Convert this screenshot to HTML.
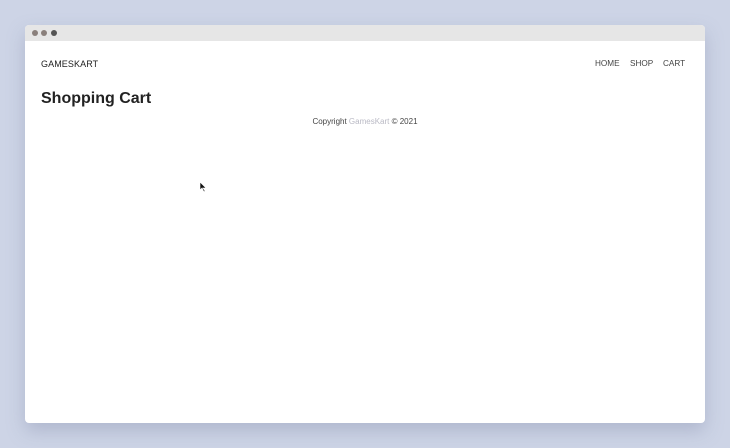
<!DOCTYPE html>
<html><head><meta charset="utf-8"><style>
html,body{margin:0;padding:0;width:730px;height:448px;overflow:hidden;background:#cdd4e6;font-family:"Liberation Sans",sans-serif;}
.win{position:absolute;left:25px;top:25px;width:680px;height:398px;background:#fff;border-radius:4px;box-shadow:0 8px 18px rgba(120,130,160,.35);overflow:hidden;}
.bar{height:16px;background:#e6e6e6;position:relative;}
.d{position:absolute;top:5px;width:6px;height:6px;border-radius:50%;background:#8a807c;}
.logo{position:absolute;left:16px;top:34px;font-size:9px;color:#222;letter-spacing:.1px;}
.nav{position:absolute;top:34px;font-size:8.2px;color:#444;}
h1{position:absolute;left:16px;top:65px;margin:0;font-size:16px;font-weight:bold;color:#222;}
.copy{position:absolute;left:0;width:680px;text-align:center;top:92px;font-size:8px;color:#444;}
.copy span{color:#b9b9c4;}
</style></head><body>
<div class="win">
<div class="bar"><div class="d" style="left:7px"></div><div class="d" style="left:16px"></div><div class="d" style="left:26px;background:#555"></div></div>
<div class="logo">GAMESKART</div>
<div class="nav" style="left:570px">HOME</div>
<div class="nav" style="left:605px">SHOP</div>
<div class="nav" style="left:638px">CART</div>
<h1>Shopping Cart</h1>
<div class="copy">Copyright <span>GamesKart</span> © 2021</div>
<svg style="position:absolute;left:174px;top:156px" width="8" height="12" viewBox="0 0 8 12"><path d="M1 1 L1 9 L3 7 L5 11 L6 10 L4 7 L7 7 Z" fill="#111" stroke="#fff" stroke-width=".6"/></svg>
</div>
</body></html>
